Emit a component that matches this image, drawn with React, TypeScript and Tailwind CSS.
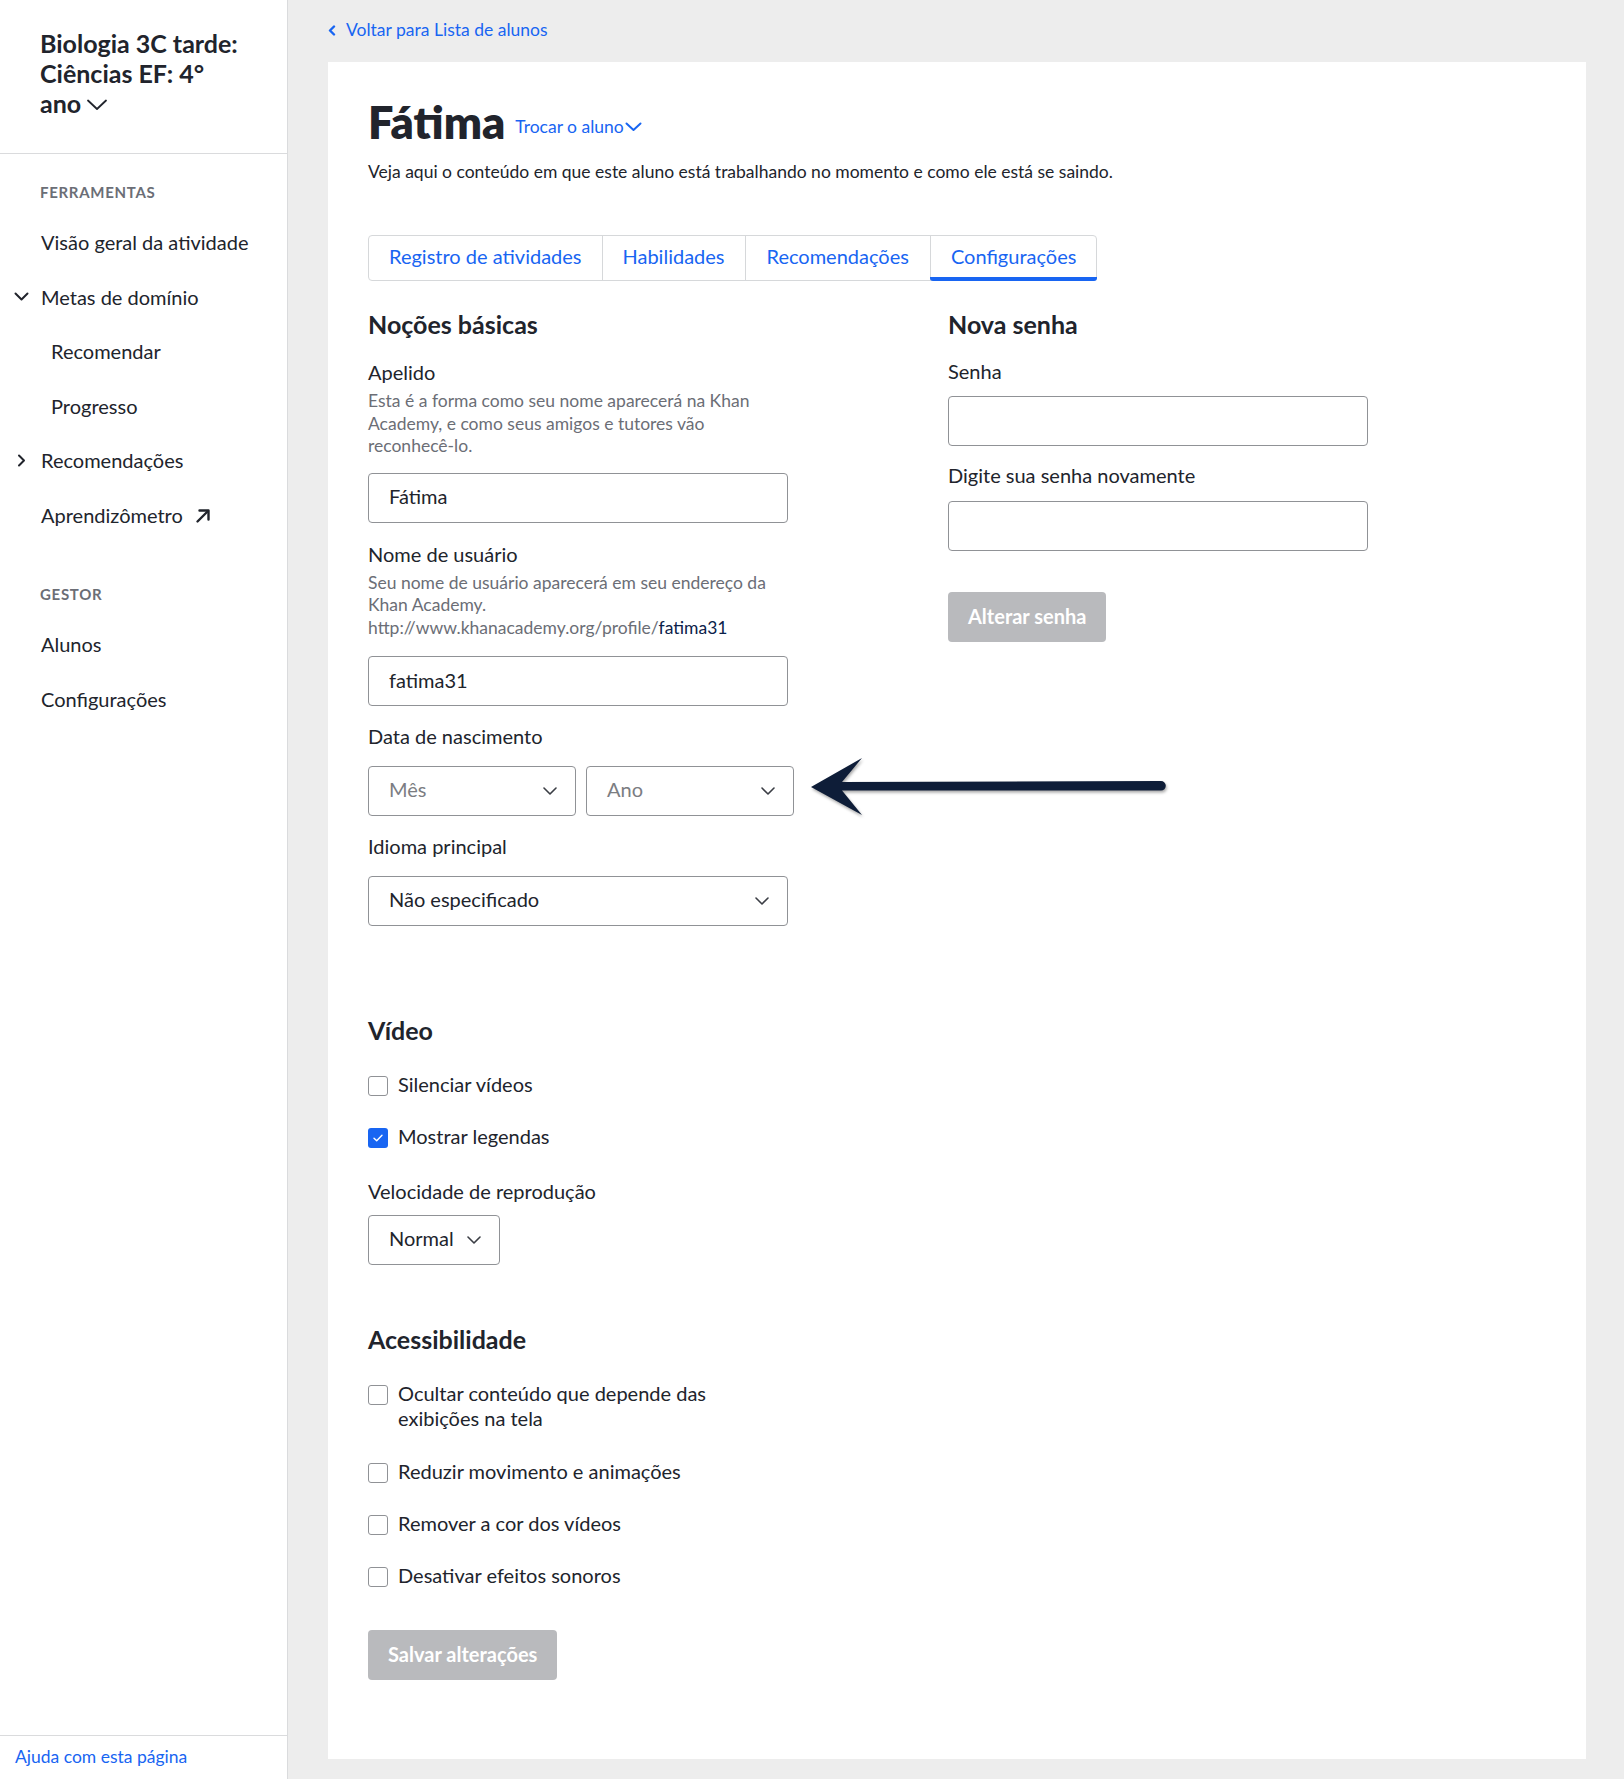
import React from "react";

const BLUE = "text-[#1865f2]";

function ChevronDown({ className = "" }: { className?: string }) {
  return (
    <svg width="14" height="8" viewBox="0 0 14 8" className={className} fill="none">
      <path d="M1 1 L7 7 L13 1" stroke="#3b3e45" strokeWidth="1.6" strokeLinecap="round" strokeLinejoin="round" />
    </svg>
  );
}

function TextInput({ value, className = "" }: { value?: string; className?: string }) {
  return (
    <div className={`h-[50px] border border-[#909296] rounded-[4px] px-5 pb-[3px] flex items-center text-[20px] text-[#21242c] ${className}`}>
      {value}
    </div>
  );
}

function Select({ label, placeholder, className = "" }: { label: string; placeholder?: boolean; className?: string }) {
  return (
    <div className={`h-[50px] border border-[#909296] rounded-[4px] pl-5 pr-[18px] flex items-center justify-between text-[20px] ${placeholder ? "text-[#7b7d82]" : "text-[#21242c]"} ${className}`}>
      <span className="pb-[5px]">{label}</span>
      <ChevronDown />
    </div>
  );
}

function Checkbox({ checked }: { checked?: boolean }) {
  return checked ? (
    <div className="w-[20px] h-[20px] rounded-[3px] bg-[#1865f2] flex items-center justify-center shrink-0 mt-[4px]">
      <svg width="12" height="10" viewBox="0 0 12 10" fill="none">
        <path d="M2 5.2 L4.7 7.8 L10 2.2" stroke="white" strokeWidth="1.4" strokeLinecap="round" strokeLinejoin="round" />
      </svg>
    </div>
  ) : (
    <div className="w-[20px] h-[20px] rounded-[3px] border border-[#909296] bg-white shrink-0 mt-[4px]" />
  );
}

function CheckRow({ label, checked, className = "" }: { label: string; checked?: boolean; className?: string }) {
  return (
    <div className={`flex items-start gap-[10px] ${className}`}>
      <Checkbox checked={checked} />
      <span className="text-[20px] leading-[25px] text-[#21242c] max-w-[330px]">{label}</span>
    </div>
  );
}

function NavItem({ children, indent, icon }: { children: React.ReactNode; indent?: boolean; icon?: React.ReactNode }) {
  return (
    <li className={`h-[54.5px] flex items-center text-[20px] text-[#21242c] ${icon ? "pl-[14px]" : indent ? "pl-[51px]" : "pl-[41px]"}`}>
      {icon && <span className="w-[27px] flex items-center">{icon}</span>}
      {children}
    </li>
  );
}

export default function App() {
  return (
    <div className="min-h-screen flex font-['Lato',sans-serif] text-[#21242c]">
      {/* Sidebar */}
      <aside className="w-[288px] shrink-0 bg-white border-r border-[#dadbdd] flex flex-col">
        <div className="px-10 pt-[28px] pb-[35px] border-b border-[#dadbdd]">
          <div className="text-[25px] leading-[30px] font-bold">
            Biologia 3C tarde:
            <br />
            Ciências EF: 4°
            <br />
            <span className="inline-flex items-center gap-[6px]">
              ano
              <svg width="20" height="12" viewBox="0 0 20 12" fill="none" className="mt-[4px]">
                <path d="M1 1.5 L10 10 L19 1.5" stroke="#21242c" strokeWidth="1.8" strokeLinecap="round" strokeLinejoin="round" />
              </svg>
            </span>
          </div>
        </div>
        <div className="mt-[28px] pl-[40px] text-[15px] leading-[20px] font-bold tracking-[0.7px] text-[#6b6e76]">FERRAMENTAS</div>
        <ul className="mt-[13px]">
          <NavItem>Visão geral da atividade</NavItem>
          <NavItem
            icon={
              <svg width="15" height="9" viewBox="0 0 15 9" fill="none">
                <path d="M1.5 1.5 L7.5 7.5 L13.5 1.5" stroke="#21242c" strokeWidth="2" strokeLinecap="round" strokeLinejoin="round" />
              </svg>
            }
          >
            Metas de domínio
          </NavItem>
          <NavItem indent>Recomendar</NavItem>
          <NavItem indent>Progresso</NavItem>
          <NavItem
            icon={
              <svg width="15" height="13" viewBox="0 0 15 13" fill="none">
                <path d="M5 1.5 L10 6.5 L5 11.5" stroke="#21242c" strokeWidth="2" strokeLinecap="round" strokeLinejoin="round" />
              </svg>
            }
          >
            Recomendações
          </NavItem>
          <NavItem>
            <span className="flex items-center gap-[12px]">
              Aprendizômetro
              <svg width="16" height="16" viewBox="0 0 16 16" fill="none" className="mt-[2px]">
                <path d="M2.5 13.5 L13 3" stroke="#21242c" strokeWidth="2.4" strokeLinecap="round" />
                <path d="M4.5 2.5 L13.5 2.5 L13.5 11.5" stroke="#21242c" strokeWidth="2.4" strokeLinecap="round" strokeLinejoin="round" />
              </svg>
            </span>
          </NavItem>
        </ul>
        <div className="mt-[42px] pl-[40px] text-[15px] leading-[20px] font-bold tracking-[0.7px] text-[#6b6e76]">GESTOR</div>
        <ul className="mt-[13px]">
          <NavItem>Alunos</NavItem>
          <NavItem>Configurações</NavItem>
        </ul>
        <div className="mt-auto h-[44px] border-t border-[#dadbdd] px-[15px] flex items-center">
          <span className={`text-[17.5px] ${BLUE}`}>Ajuda com esta página</span>
        </div>
      </aside>

      {/* Main */}
      <main className="flex-1 bg-[#ededed] pl-10 pr-[38px] pt-[19px] pb-[18px]">
        <div className={`flex items-center gap-[10px] text-[17.5px] leading-[22px] ${BLUE}`}>
          <svg width="8" height="11" viewBox="0 0 8 11" fill="none">
            <path d="M6 1.5 L2 5.5 L6 9.5" stroke="#1865f2" strokeWidth="2.4" strokeLinecap="round" strokeLinejoin="round" />
          </svg>
          Voltar para Lista de alunos
        </div>

        <div className="mt-[21px] bg-white px-10 pt-[33px] pb-[79px]">
          <div className="flex items-center">
            <h1 className="text-[45px] leading-[54px] font-extrabold text-[#21242c]">Fátima</h1>
            <span className={`ml-[10px] mt-[10px] flex items-center text-[17.5px] leading-[22px] ${BLUE}`}>
              Trocar o aluno
              <svg width="17" height="10" viewBox="0 0 17 10" fill="none" className="ml-[1px]">
                <path d="M1.5 1.5 L8.5 8 L15.5 1.5" stroke="#1865f2" strokeWidth="2" strokeLinecap="round" strokeLinejoin="round" />
              </svg>
            </span>
          </div>
          <p className="mt-[12px] text-[17.5px] leading-[22px] text-[#21242c]">
            Veja aqui o conteúdo em que este aluno está trabalhando no momento e como ele está se saindo.
          </p>

          {/* Tabs */}
          <div className="mt-[52px] inline-flex h-[46px] border border-[#d6d8da] rounded-[4px]">
            <div className={`px-5 pb-[4px] flex items-center text-[20px] ${BLUE}`}>Registro de atividades</div>
            <div className={`px-5 pb-[4px] flex items-center text-[20px] border-l border-[#d6d8da] ${BLUE}`}>Habilidades</div>
            <div className={`px-[21px] pb-[4px] flex items-center text-[20px] border-l border-[#d6d8da] ${BLUE}`}>Recomendações</div>
            <div className={`relative px-5 pb-[4px] flex items-center text-[20px] border-l border-[#d6d8da] ${BLUE}`}>
              Configurações
              <div className="absolute -left-px -right-px -bottom-px h-[4px] bg-[#1865f2] rounded-b-[3px]" />
            </div>
          </div>

          {/* Two columns */}
          <div className="grid grid-cols-[580px_420px]">
            <div>
              <h2 className="mt-[28px] text-[25px] leading-[30px] font-bold">Noções básicas</h2>
              <div className="mt-[21px] text-[20px] leading-[25px]">Apelido</div>
              <p className="mt-[5px] w-[420px] text-[17.5px] leading-[22.5px] text-[#6b6e76]">
                Esta é a forma como seu nome aparecerá na Khan Academy, e como seus amigos e tutores vão reconhecê-lo.
              </p>
              <TextInput value="Fátima" className="mt-[15px] w-[420px]" />

              <div className="mt-[19px] text-[20px] leading-[25px]">Nome de usuário</div>
              <p className="mt-[5px] w-[420px] text-[17.5px] leading-[22.5px] text-[#6b6e76]">
                Seu nome de usuário aparecerá em seu endereço da Khan Academy.
                <br />
                http://www.khanacademy.org/profile/<span className="text-[#0b2149]">fatima31</span>
              </p>
              <TextInput value="fatima31" className="mt-[17px] w-[420px]" />

              <div className="mt-[18px] text-[20px] leading-[25px]">Data de nascimento</div>
              <div className="relative mt-[17px] flex gap-[10px]">
                <Select label="Mês" placeholder className="w-[208px]" />
                <Select label="Ano" placeholder className="w-[208px]" />
                <svg
                  width="360"
                  height="60"
                  viewBox="0 0 360 60"
                  className="absolute left-[441px] -top-[10px] drop-shadow-[1px_2px_1.5px_rgba(0,0,0,0.35)]"
                >
                  <path
                    d="M2 31 L53 2 L33 26 L352 25 A4.8 4.8 0 0 1 352 34.6 L33 34.6 L53 59 Z"
                    fill="#0e1d38"
                  />
                </svg>
              </div>

              <div className="mt-[18px] text-[20px] leading-[25px]">Idioma principal</div>
              <Select label="Não especificado" className="mt-[17px] w-[420px]" />
            </div>

            <div>
              <h2 className="mt-[28px] text-[25px] leading-[30px] font-bold">Nova senha</h2>
              <div className="mt-[20px] text-[20px] leading-[25px]">Senha</div>
              <TextInput className="mt-[12px] w-[420px]" />
              <div className="mt-[17px] text-[20px] leading-[25px]">Digite sua senha novamente</div>
              <TextInput className="mt-[13px] w-[420px]" />
              <div className="mt-[41px] inline-flex h-[50px] items-center px-5 pb-[2px] rounded-[4px] bg-[#b9babd] text-white text-[20px] font-bold">
                Alterar senha
              </div>
            </div>
          </div>

          {/* Video */}
          <h2 className="mt-[89px] text-[25px] leading-[30px] font-bold">Vídeo</h2>
          <CheckRow label="Silenciar vídeos" className="mt-[27px]" />
          <CheckRow label="Mostrar legendas" checked className="mt-[27px]" />
          <div className="mt-[30px] text-[20px] leading-[25px]">Velocidade de reprodução</div>
          <div className="mt-[11px] inline-flex h-[50px] items-center gap-[13px] border border-[#909296] rounded-[4px] pl-5 pr-[18px] text-[20px]">
            <span className="pb-[5px]">Normal</span>
            <ChevronDown />
          </div>

          {/* Accessibility */}
          <h2 className="mt-[59px] text-[25px] leading-[30px] font-bold">Acessibilidade</h2>
          <CheckRow label="Ocultar conteúdo que depende das exibições na tela" className="mt-[27px]" />
          <CheckRow label="Reduzir movimento e animações" className="mt-[28px]" />
          <CheckRow label="Remover a cor dos vídeos" className="mt-[27px]" />
          <CheckRow label="Desativar efeitos sonoros" className="mt-[27px]" />

          <div className="mt-[42px] inline-flex h-[50px] items-center px-5 pb-[2px] rounded-[4px] bg-[#b9babd] text-white text-[20px] font-bold">
            Salvar alterações
          </div>
        </div>
      </main>
    </div>
  );
}
